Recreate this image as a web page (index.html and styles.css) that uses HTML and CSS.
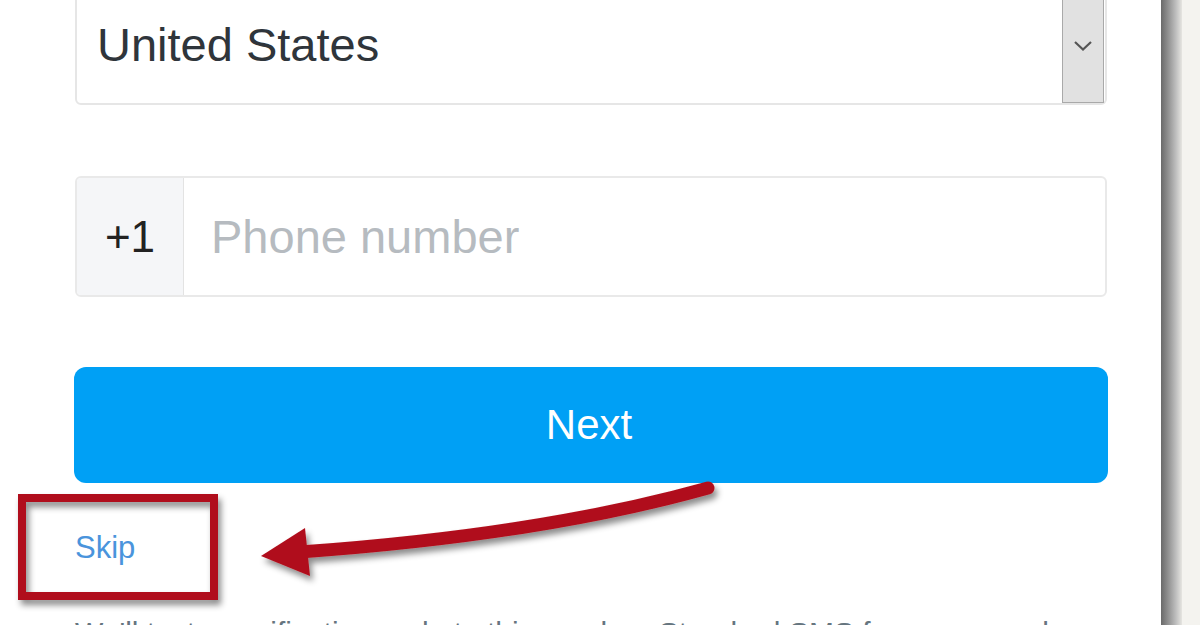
FILE: index.html
```html
<!DOCTYPE html>
<html lang="en">
<head>
<meta charset="utf-8">
<title>Add a phone number</title>
<link rel="stylesheet" href="styles.css">
</head>
<body>
  <div class="panel">
    <form class="form">
      <div class="select">
        <span class="select-value">United States</span>
        <span class="select-btn">
          <svg width="20" height="12" viewBox="0 0 20 12"><path d="M2 2 L10 9.5 L18 2" fill="none" stroke="#555" stroke-width="2.2"/></svg>
        </span>
      </div>
      <div class="phone">
        <span class="prefix">+1</span>
        <span class="placeholder">Phone number</span>
      </div>
      <button type="button" class="next">Next</button>
      <a class="skip" href="#">Skip</a>
      <p class="note">We'll text a verification code to this number. Standard SMS fees may apply.</p>
    </form>
    <svg class="annotation" width="1161" height="625" viewBox="0 0 1161 625">
      <defs>
        <filter id="sh" x="-20%" y="-20%" width="140%" height="160%">
          <feDropShadow dx="3" dy="5" stdDeviation="3" flood-color="#000" flood-opacity="0.45"/>
        </filter>
      </defs>
      <rect x="22" y="498" width="192" height="98" fill="none" stroke="#b0111c" stroke-width="8" filter="url(#sh)"/>
      <g filter="url(#sh)">
        <path d="M708 488 Q540 535 300 552" fill="none" stroke="#b0111c" stroke-width="13" stroke-linecap="round"/>
        <polygon points="261,556 305,528 310,576" fill="#b0111c"/>
      </g>
    </svg>
  </div>
  <div class="edge"></div>
  <div class="desk"></div>
</body>
</html>
```

FILE: styles.css
```css
html, body {
  margin: 0;
  padding: 0;
}

body {
  display: flex;
  height: 625px;
  overflow: hidden;
  background: #f4f3ef;
  font-family: "Liberation Sans", Arial, sans-serif;
}

.panel {
  position: relative;
  width: 1161px;
  flex: none;
  background: #fff;
  box-sizing: border-box;
  padding: 0 54px 0 75px;
}

.edge {
  width: 21px;
  flex: none;
  background: linear-gradient(to right, #6a6a6a 0%, #8c8c8c 30%, #bdbdbd 70%, #e6e5e1 100%);
}

.desk {
  flex: 1;
  background: #f4f3ef;
}

.form {
  margin: -17px 0 0;
  display: flex;
  flex-direction: column;
}

.select {
  height: 122px;
  box-sizing: border-box;
  border: 2px solid #e6e6e6;
  border-radius: 6px;
  display: flex;
  align-items: center;
}

.select-value {
  padding-left: 20px;
  font-size: 47px;
  color: #2f353b;
}

.select-btn {
  margin-left: auto;
  margin-right: 1px;
  align-self: stretch;
  width: 42px;
  background: #e1e1e1;
  border: 1px solid #a9a9a9;
  border-top: none;
  display: flex;
  align-items: center;
  justify-content: center;
  padding-top: 4px;
  box-sizing: border-box;
}

.phone {
  margin-top: 71px;
  height: 121px;
  box-sizing: border-box;
  border: 2px solid #e9e9e9;
  border-radius: 6px;
  display: flex;
  align-items: stretch;
  overflow: hidden;
}

.prefix {
  width: 106px;
  flex: none;
  background: #f5f6f8;
  border-right: 1px solid #e3e3e3;
  display: flex;
  align-items: center;
  justify-content: center;
  font-size: 44px;
  color: #222;
}

.placeholder {
  display: flex;
  align-items: center;
  padding-left: 27px;
  font-size: 47px;
  color: #b6bbc0;
}

.next {
  margin: 70px -1px 0;
  height: 116px;
  border: none;
  border-radius: 12px;
  background: #00a0f5;
  color: #fff;
  font-family: inherit;
  font-size: 42px;
  padding: 0 4px 0 0;
}

.skip {
  margin-top: 46px;
  align-self: flex-start;
  font-size: 31px;
  line-height: 1.2;
  color: #4a94dc;
  text-decoration: none;
}

.note {
  margin: 46px 0 0;
  font-size: 30px;
  line-height: 1.4;
  color: #66757f;
}

.annotation {
  position: absolute;
  left: 0;
  top: 0;
  pointer-events: none;
}
```
